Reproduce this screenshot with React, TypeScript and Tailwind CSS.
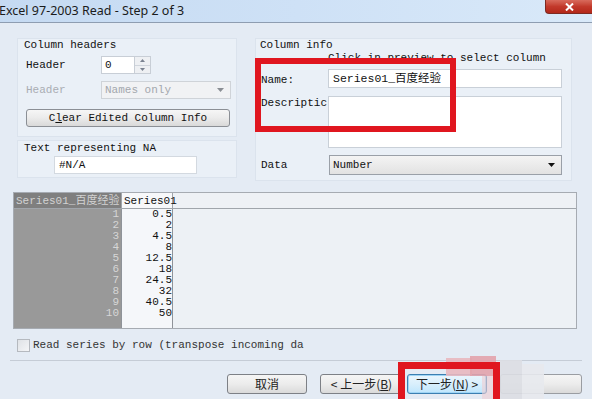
import React from "react";

function Tri({ color = "#000", up = false, w = 7, h = 4 }: { color?: string; up?: boolean; w?: number; h?: number }) {
  return (
    <svg width={w} height={h} viewBox="0 0 7 4">
      <path d={up ? "M0 4 L3.5 0 L7 4Z" : "M0 0 L7 0 L3.5 4Z"} fill={color} />
    </svg>
  );
}

const values = ["0.5", "2", "4.5", "8", "12.5", "18", "24.5", "32", "40.5", "50"];

export default function App() {
  return (
    <div className="relative w-[592px] h-[399px] overflow-hidden bg-[#e4ebf4] font-['Liberation_Mono','Noto_Sans_CJK_SC',monospace] text-[11px] leading-[12px] text-[#111]">
      {/* Title bar */}
      <div className="flex h-[23px] items-start justify-between border-b border-[#8e9db1] bg-gradient-to-r from-[#c5daf2] via-[#cee1f6] to-[#d9e9f9]">
        <div className="mt-[3px] -ml-[1px] font-['Noto_Sans','Noto_Sans_CJK_SC',sans-serif] text-[12.5px] leading-[15px] text-[#1b1b1b]">
          Excel 97-2003 Read - Step 2 of 3
        </div>
        <div className="flex h-[14px] w-[47px] items-center justify-center rounded-bl-[4px] border border-t-0 border-r-0 border-[#7d2a22] bg-gradient-to-b from-[#d86a5c] via-[#c2392b] to-[#b3281a]">
          <svg width="9" height="8" viewBox="0 0 9 8">
            <path d="M1 0.5 L8 7.5 M8 0.5 L1 7.5" stroke="#fff" strokeWidth="2" />
          </svg>
        </div>
      </div>

      {/* Top section */}
      <div className="flex items-start pt-[15px]">
        {/* Left column */}
        <div className="ml-[17px] flex w-[220px] flex-col">
          <div className="flex flex-col border border-[#dbe3ed] bg-[#eaf0f7] pb-[9px]">
            <div className="h-[12px] pl-[6px]">Column headers</div>
            <div className="mt-[5px] flex h-[18px] items-center pl-[8px]">
              <div className="w-[75px]">Header</div>
              <div className="flex h-[18px] w-[34px] items-center border border-[#c8ced6] bg-white pl-[3px]">0</div>
              <div className="flex h-[18px] w-[16px] flex-col border border-l-0 border-[#c8ced6] bg-[#eef0f3]">
                <div className="flex flex-1 items-center justify-center border-b border-[#d0d5dc]">
                  <Tri up color="#7a8290" w={5} h={3} />
                </div>
                <div className="flex flex-1 items-center justify-center">
                  <Tri color="#7a8290" w={5} h={3} />
                </div>
              </div>
            </div>
            <div className="mt-[7px] flex h-[18px] items-center pl-[8px]">
              <div className="w-[75px] text-[#a9adb3]">Header</div>
              <div className="flex h-[18px] w-[130px] items-center justify-between border border-[#cfd3d8] bg-[#f1f2f4] pl-[3px] pr-[6px] text-[#a3a7ad]">
                <span>Names only</span>
                <Tri color="#8a8e94" />
              </div>
            </div>
            <div className="mt-[10px] ml-[8px] flex h-[18px] w-[204px] items-center justify-center rounded-[3px] border border-[#8b8f95] bg-gradient-to-b from-[#f6f6f6] via-[#ebebeb] to-[#d9d9d9]">
              <span>
                C<span className="underline">l</span>ear Edited Column Info
              </span>
            </div>
          </div>
          <div className="mt-[3px] flex flex-col border border-[#dbe3ed] bg-[#eaf0f7] pt-[1px] pb-[3px]">
            <div className="h-[12px] pl-[6px]">Text representing NA</div>
            <div className="mt-[2px] ml-[36px] flex h-[18px] w-[143px] items-center border border-[#d3d9e0] bg-white pl-[4px]">
              #N/A
            </div>
          </div>
        </div>

        {/* Right column */}
        <div className="ml-[18px] flex w-[317px] flex-col border border-[#dbe3ed] bg-[#eaf0f7] pb-[5px]">
          <div className="h-[12px] pl-[4px]">Column info</div>
          <div className="mt-[1px] h-[12px] pl-[72px]">Click in preview to select column</div>
          <div className="mt-[5px] flex h-[19px] items-center">
            <div className="w-[72px] pl-[5px] pt-[3px]">Name:</div>
            <div className="flex h-[19px] w-[234px] items-center border border-[#c9d0d8] bg-white pl-[4px] text-[11.5px]">
              Series01_百度经验
            </div>
          </div>
          <div className="mt-[8px] flex h-[52px] items-start">
            <div className="w-[72px] overflow-hidden whitespace-nowrap pl-[5px] pt-[1px]">Descriptic</div>
            <div className="h-[52px] w-[234px] border border-[#c9d0d8] bg-white" />
          </div>
          <div className="mt-[7px] flex h-[20px] items-center">
            <div className="w-[73px] pl-[5px]">Data</div>
            <div className="flex h-[20px] w-[233px] items-center justify-between border border-[#9aa0a8] bg-gradient-to-b from-[#f4f4f4] to-[#e2e2e2] pl-[3px] pr-[6px]">
              <span>Number</span>
              <Tri color="#111" />
            </div>
          </div>
        </div>
      </div>

      {/* Table */}
      <div className="ml-[13px] mt-[11px] flex h-[137px] w-[564px] flex-col border border-[#a6abb2] bg-[#edf1f5]">
        <div className="flex h-[16px] border-b border-[#a0a5ab] bg-[#eef1f5]">
          <div className="flex w-[107px] items-center whitespace-nowrap bg-[#7f7f7f] pl-[2px] text-[#d2d2d2]">
            Series01_百度经验
          </div>
          <div className="flex w-[52px] items-center border-x border-[#a0a5ab] bg-[#f7f8fa] pl-[2px]">Series01</div>
          <div className="flex-1" />
        </div>
        <div className="flex flex-1">
          <div className="flex w-[107px] flex-col items-end bg-[#999999] pr-[2px] text-[#d6d6d6] leading-[11px]">
            {values.map((_, i) => (
              <div key={i}>{i + 1}</div>
            ))}
          </div>
          <div className="flex w-[52px] flex-col items-end border-x border-[#8f9399] bg-[#f5f7fa] leading-[11px]">
            {values.map((v, i) => (
              <div key={i}>{v}</div>
            ))}
          </div>
          <div className="flex-1" />
        </div>
      </div>

      {/* Checkbox */}
      <div className="mt-[9px] flex h-[14px] items-center pl-[17px]">
        <div className="h-[13px] w-[13px] border border-[#b5b9bf] bg-gradient-to-br from-[#dfe2e6] to-[#f4f5f7]" />
        <div className="ml-[3px] whitespace-nowrap text-[#333]">Read series by row (transpose incoming da</div>
      </div>

      {/* Separator */}
      <div className="mx-[10px] mt-[8px] h-[2px] border-t border-[#c5ccd6] border-b-white" />

      {/* Buttons */}
      <div className="mt-[12px] flex h-[20px] items-stretch font-['Noto_Sans_CJK_SC',sans-serif] text-[12px] text-[#222]">
        <div className="ml-[227px] flex w-[80px] items-center justify-center rounded-[3px] border border-[#7d8086] bg-gradient-to-b from-[#f5f5f5] via-[#ececec] to-[#dadada]">
          取消
        </div>
        <div className="ml-[13px] flex w-[83px] items-center justify-center rounded-[3px] border border-[#7d8086] bg-gradient-to-b from-[#f5f5f5] via-[#ececec] to-[#dadada]">
          &lt; 上一步(<span className="underline">B</span>)
        </div>
        <div className="ml-[4px] flex w-[80px] items-center justify-center rounded-[3px] border border-[#3c7fb1] bg-gradient-to-b from-[#eaf6fd] via-[#d9effc] to-[#bee6fd] shadow-[inset_0_0_0_1px_#9fd5f5]">
          下一步(<span className="underline">N</span>) &gt;
        </div>
        <div className="ml-[13px] flex w-[82px] items-center justify-center rounded-[3px] border border-[#9a9da2] bg-gradient-to-b from-[#f5f5f5] via-[#ececec] to-[#dadada]" />
      </div>

      {/* Watermark blur overlay */}
      <div className="absolute left-[446px] top-[358px] h-[18px] w-[26px] bg-[#e8b8bf] opacity-90" />
      <div className="absolute left-[470px] top-[356px] h-[20px] w-[26px] bg-[#e2a3ac] opacity-90" />
      <div className="absolute left-[482px] top-[376px] h-[23px] w-[18px] bg-[#efcdd2] opacity-60" />
      <div className="absolute left-[500px] top-[360px] h-[39px] w-[22px] bg-[#dcdee3] opacity-90" />
      <div className="absolute left-[522px] top-[364px] h-[35px] w-[22px] bg-[#e7e9ed] opacity-90" />

      {/* Red annotation rectangles */}
      <div className="absolute left-[255px] top-[58px] h-[74px] w-[201px] border-[6px] border-[#e0161f]" />
      <div className="absolute left-[398px] top-[362px] h-[50px] w-[102px] border-[7px] border-[#e0161f]" />
    </div>
  );
}
